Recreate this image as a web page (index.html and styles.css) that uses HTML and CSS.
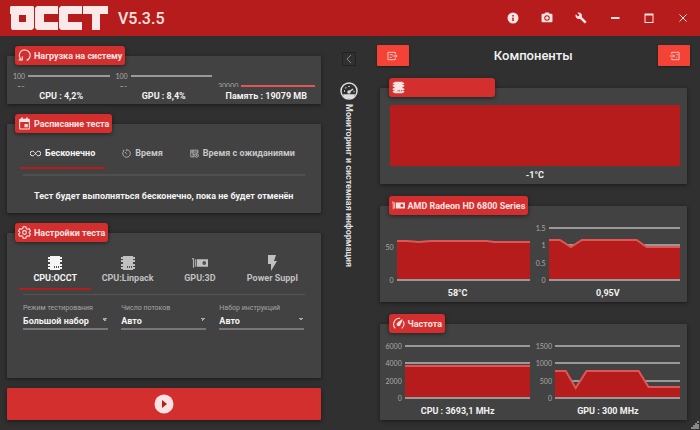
FILE: index.html
```
<!DOCTYPE html>
<html lang="ru">
<head>
<meta charset="utf-8">
<title>OCCT V5.3.5</title>
<meta name="viewport" content="width=device-width, initial-scale=1">
<link rel="stylesheet" href="styles.css">
</head>
<body>
<svg class="sprite" aria-hidden="true">
  <symbol id="chip" viewBox="0 0 16 14"><path d="M3 0h10v1h2v2h-2v1h2v2h-2v2h2v2h-2v1h2v2h-2v1H3v-1H1v-2h2v-1H1V8h2V6H1V4h2V3H1V1h2z"/><path class="hole" d="M7 10h1v2H7zM9 10h1v2H9zM11 10h1v2h-1z"/></symbol>
  <symbol id="gpu" viewBox="0 0 17 10"><path d="M0 0h2v10H1V1H0zM3 1h1v8H3zM5 1h12v8H5z"/><circle class="hole" cx="13" cy="5" r="2"/></symbol>
</svg>

<header class="titlebar">
  <svg class="logo" viewBox="0 0 98 24" role="img" aria-label="OCCT">
    <path fill-rule="evenodd" d="M1 0H23L24 1V22L22 24H2L1 22V8H0V1zM9 9V16H16V9z"/>
    <path d="M27 0H48V8H34V16H48V24H27L25 22V2z"/>
    <path d="M51 0H72V8H58V16H72V24H51L49 22V2z"/>
    <path d="M73 0H98V8H90V24H82V8H73z"/>
  </svg>
  <h1 class="version">V5.3.5</h1>
  <nav class="window-actions">
    <button class="win-btn" aria-label="Информация"><svg viewBox="0 0 24 24"><path d="M12 1a11 11 0 1 0 0 22 11 11 0 0 0 0-22zm1.500 17h-3v-7h3zm0-9h-3V6h3z"/></svg></button>
    <button class="win-btn" aria-label="Снимок"><svg viewBox="1 1 22 22"><circle cx="12" cy="12" r="3.200"/><path d="M9 2 7.200 4H4a2 2 0 0 0-2 2v12a2 2 0 0 0 2 2h16a2 2 0 0 0 2-2V6a2 2 0 0 0-2-2h-3.200L15 2zm3 15a5 5 0 1 1 0-10 5 5 0 0 1 0 10z"/></svg></button>
    <button class="win-btn" aria-label="Настройки"><svg viewBox="0 0 24 24"><path d="M22.700 19l-9.100-9.100c.9-2.300.4-5-1.500-6.900-2-2-5-2.400-7.400-1.300L9 6 6 9 1.600 4.700C.4 7.100.9 10.100 2.900 12.100c1.900 1.900 4.600 2.400 6.900 1.500l9.100 9.100c.4.400 1 .4 1.400 0l2.300-2.300c.5-.4.5-1.100.1-1.400z"/></svg></button>
    <button class="win-btn" aria-label="Свернуть"><svg viewBox="0 0 24 24"><path d="M4 10h17v4H4z"/></svg></button>
    <button class="win-btn" aria-label="Развернуть"><svg viewBox="0 0 24 24"><path d="M3 3h18v19H3zm2 4v13h14V7z" fill-rule="evenodd"/></svg></button>
    <button class="win-btn" aria-label="Закрыть"><svg viewBox="0 0 24 24"><path d="M5 5l14 14M19 5 5 19" stroke="#fbe3e3" stroke-width="2"/></svg></button>
  </nav>
</header>

<main class="workspace">
  <section class="controls">
    <article class="card load">
      <h2 class="badge"><svg class="badge-icon line" viewBox="0 0 24 24"><path d="M7 20A10 10 0 1 1 16 21"/><path d="M1 20h7v-6"/></svg>Нагрузка на систему</h2>
      <div class="load-grid">
        <div class="load-item">
          <div class="load-chart"><div class="load-axis"><span>100</span><span>50</span></div><div class="load-line"></div></div>
          <p class="value">CPU : 4,2%</p>
        </div>
        <div class="load-item">
          <div class="load-chart"><div class="load-axis"><span>100</span><span>50</span></div><div class="load-line"></div></div>
          <p class="value">GPU : 8,4%</p>
        </div>
        <div class="load-item">
          <div class="load-chart memory"><div class="load-axis"><span>30000</span></div><div class="load-line"></div></div>
          <p class="value">Память : 19079 MB</p>
        </div>
      </div>
    </article>

    <article class="card schedule">
      <h2 class="badge"><svg class="badge-icon" viewBox="1 0 22 24"><path d="M19 3h-1V1h-3v2H9V1H6v2H4a2 2 0 0 0-2 2v16a2 2 0 0 0 2 2h16a2 2 0 0 0 2-2V5a2 2 0 0 0-2-2zm1 18H4V9h16zm-8-8h6v6h-6z"/></svg>Расписание теста</h2>
      <div class="tabs" role="tablist">
        <button class="tab active" role="tab" aria-selected="true"><svg viewBox="0 0 24 24" class="tab-icon wide"><path d="M12 12C9 8 8 7 5.500 7a5 5 0 0 0 0 10C8 17 9 16 12 12s4-5 6.500-5a5 5 0 0 1 0 10C16 17 15 16 12 12z"/></svg>Бесконечно</button>
        <button class="tab" role="tab"><svg viewBox="0 0 24 24" class="tab-icon"><path d="M5 5a10 10 0 1 0 7-3M12 2v4M8 8l5 6M2 3l4 1"/></svg>Время</button>
        <button class="tab" role="tab"><svg viewBox="0 0 24 24" class="tab-icon"><path d="M12 21H2V3h19v8M2 8h19M8 3v18M8 14h5"/><circle cx="17.500" cy="17" r="5"/><path d="M17 14v4h3"/></svg>Время с ожиданиями</button>
      </div>
      <p class="note">Тест будет выполняться бесконечно, пока не будет отменён</p>
    </article>

    <article class="card settings">
      <h2 class="badge"><svg class="badge-icon line" viewBox="0 0 24 24"><path d="M9.500 1.500h5l.8 3.300 2 1.200 3.300-1 2.400 4.200-2.400 2.300v1l2.400 2.300-2.400 4.200-3.300-1-2 1.200-.8 3.300h-5l-.8-3.300-2-1.200-3.300 1L1 14.800l2.400-2.300v-1L1 9.200 3.400 5l3.300 1 2-1.200z"/><circle cx="12" cy="12" r="3.500"/></svg>Настройки теста</h2>
      <div class="test-tabs" role="tablist">
        <button class="test-tab active" role="tab" aria-selected="true"><svg class="test-icon"><use href="#chip"/></svg>CPU:OCCT</button>
        <button class="test-tab" role="tab"><svg class="test-icon"><use href="#chip"/></svg>CPU:Linpack</button>
        <button class="test-tab" role="tab"><svg class="test-icon"><use href="#gpu"/></svg>GPU:3D</button>
        <button class="test-tab" role="tab"><svg class="test-icon" viewBox="0 0 16 16"><path d="M4 0h8l-2 6h3L7 16V9H4z"/></svg>Power Suppl</button>
      </div>
      <div class="fields">
        <div class="field"><label for="mode">Режим тестирования</label><select id="mode"><option>Большой набор</option></select></div>
        <div class="field"><label for="threads">Число потоков</label><select id="threads"><option>Авто</option></select></div>
        <div class="field"><label for="isa">Набор инструкций</label><select id="isa"><option>Авто</option></select></div>
      </div>
    </article>

    <button class="start" aria-label="Запустить тест"><svg viewBox="0 0 20 20"><circle cx="10" cy="10" r="9.500" fill="#fbe3e3"/><path d="M8 6l5 4-5 4z" fill="#b71c1c"/></svg></button>
  </section>

  <aside class="rail">
    <button class="collapse" aria-label="Свернуть панель"><svg viewBox="0 0 12 12" fill="none" stroke="currentColor"><path d="M8 2 4 6l4 4"/></svg></button>
    <div class="rail-tab">
      <svg class="rail-icon" viewBox="0 0 18 18" fill="none" stroke="#ddd" stroke-width="1.500"><circle cx="9" cy="9" r="8"/><path d="M4 13h10l-1 2.500H5z" fill="#ddd"/><circle cx="9" cy="10" r="1" fill="#ddd"/><path d="M9 10l4-3"/><path d="M4 9h1M5.500 5.500l.7.7M9 4v1M13.500 9.500h1"/></svg>
      <span class="rail-text">Мониторинг и системная информация</span>
    </div>
  </aside>

  <section class="monitor">
    <div class="monitor-head">
      <button class="nav-btn" aria-label="Назад"><svg viewBox="0 0 12 10" fill="none" stroke="currentColor"><path d="M9 3V1H1v8h8V7M3 3.500h3M3 6.500h2M6 5h5M9 3.500 11 5 9 6.500"/></svg></button>
      <h2 class="monitor-title">Компоненты</h2>
      <button class="nav-btn" aria-label="Вперёд"><svg viewBox="0 0 12 10" fill="none" stroke="currentColor"><path d="M3 3V1h8v8H3V7M1 5h5M4.500 3.500 6 5 4.500 6.500M8 3.500h2M8 6.500h1"/></svg></button>
    </div>

    <article class="card sensor single">
      <h3 class="badge blank"><svg class="badge-icon"><use href="#chip"/></svg></h3>
      <div class="filled"></div>
      <p class="value">-1°C</p>
    </article>

    <article class="card sensor">
      <h3 class="badge"><svg class="badge-icon"><use href="#gpu"/></svg>AMD Radeon HD 6800 Series</h3>
      <div class="chart-pair">
        <figure class="chart">
          <div class="axis half"><span>50</span><span>0</span></div>
          <svg class="plot" viewBox="0 0 134 54" preserveAspectRatio="none"><path class="grid" d="M0 20H134M0 53H134"/><path class="area" d="M0 14H10L22 15 34 14H90L98 15H134V52H0z"/><path class="trend" d="M0 14H10L22 15 34 14H90L98 15H134"/></svg>
          <figcaption class="value">58°C</figcaption>
        </figure>
        <figure class="chart">
          <div class="axis"><span>1.5</span><span>1</span><span>0.5</span><span>0</span></div>
          <svg class="plot" viewBox="0 0 132 54" preserveAspectRatio="none"><path class="grid" d="M0 1H132M0 18H132M0 36H132M0 53H132"/><path class="area" d="M0 13H11L22 20 33 13H88L98 20H132V52H0z"/><path class="trend" d="M0 13H11L22 20 33 13H88L98 20H132"/></svg>
          <figcaption class="value">0,95V</figcaption>
        </figure>
      </div>
    </article>

    <article class="card sensor">
      <h3 class="badge"><svg class="badge-icon line" viewBox="0 0 24 24"><path d="M6 21A11 11 0 0 1 15 2.500M21 8a11 11 0 0 1-3 13"/><path d="M19 5l-5 10a2.500 2.500 0 1 1-4-3z" fill="currentColor"/></svg>Частота</h3>
      <div class="chart-pair">
        <figure class="chart">
          <div class="axis"><span>6000</span><span>4000</span><span>2000</span><span>0</span></div>
          <svg class="plot" viewBox="0 0 127 54" preserveAspectRatio="none"><path class="grid" d="M0 1H127M0 18H127M0 36H127M0 53H127"/><path class="area" d="M0 21H127V52H0z"/><path class="trend" d="M0 21H127"/></svg>
          <figcaption class="value">CPU : 3693,1 MHz</figcaption>
        </figure>
        <figure class="chart">
          <div class="axis"><span>1500</span><span>1000</span><span>500</span><span>0</span></div>
          <svg class="plot" viewBox="0 0 127 54" preserveAspectRatio="none"><path class="grid" d="M0 1H127M0 18H127M0 36H127M0 53H127"/><path class="area" d="M0 26H11L21 43 32 26H85L95 42H127V52H0z"/><path class="trend" d="M0 26H11L21 43 32 26H85L95 42H127"/></svg>
          <figcaption class="value">GPU : 300 MHz</figcaption>
        </figure>
      </div>
    </article>
  </section>
</main>
<svg class="grip" viewBox="0 0 10 10" aria-hidden="true"><path d="M7 1h2v2H7zM5 3h2v1h2v2H5zM3 5h2v4H3zM1 7h2v2H1zM5 6h4v3H5z"/></svg>
</body>
</html>
```
FILE: styles.css
```
* {
  box-sizing: border-box;
}

body {
  margin: 0;
  min-height: 100vh;
  display: flex;
  flex-direction: column;
  background: #303030;
  color: #f2f2f2;
  font-family: Roboto, sans-serif;
  font-size: 9px;
  font-weight: 700;
}

h1, h2, h3, p, figure {
  margin: 0;
}

button, select {
  margin: 0;
  border: 0;
  padding: 0;
  background: none;
  color: inherit;
  font: inherit;
}

.sprite {
  position: absolute;
  width: 0;
  height: 0;
}

.hole {
  fill: var(--hole, #555);
}

/* Title bar */
.titlebar {
  display: flex;
  align-items: center;
  height: 36px;
  padding: 0 8px 0 10px;
  background: #b71c1c;
}

.logo {
  width: 98px;
  height: 24px;
  fill: #fbe9e9;
}

.version {
  margin-left: 10px;
  font-size: 16px;
  font-weight: 500;
  color: #fbe3e3;
}

.window-actions {
  display: flex;
  gap: 16px;
  margin-left: auto;
}

.win-btn {
  display: grid;
  place-items: center;
  width: 18px;
  height: 18px;
}

.win-btn svg {
  width: 12px;
  height: 12px;
  fill: #fbe3e3;
}

/* Page grid */
.workspace {
  flex: 1;
  display: grid;
  grid-template-columns: minmax(0, 1fr) 56px minmax(0, 1fr);
  padding: 0 10px 10px 7px;
}

.controls {
  display: flex;
  flex-direction: column;
  padding-top: 20px;
}

/* Cards */
.card {
  position: relative;
  background: #424242;
  border-radius: 1px;
  box-shadow: 0 1px 4px rgba(0, 0, 0, 0.5);
}

.badge {
  --hole: #d32f2f;
  position: absolute;
  top: -10px;
  left: 8px;
  display: flex;
  align-items: center;
  gap: 3px;
  height: 19px;
  padding: 0 3px;
  border-radius: 3px;
  background: #d32f2f;
  box-shadow: 0 1px 4px rgba(0, 0, 0, 0.5);
  color: #fbe3e3;
  font-size: 9px;
  font-weight: 700;
  white-space: nowrap;
}

.badge-icon {
  width: 13px;
  height: 13px;
  fill: currentColor;
}

.badge-icon.line {
  fill: none;
  stroke: currentColor;
  stroke-width: 2;
}

.value {
  text-align: center;
  line-height: 12px;
}

/* System load */
.load {
  height: 48px;
  margin-bottom: 20px;
  padding: 14px 3px 0;
}

.load-grid {
  display: grid;
  grid-template-columns: repeat(3, 1fr);
}

.load-chart {
  display: grid;
  grid-template-columns: auto 1fr;
  gap: 3px;
  height: 17px;
  padding: 2px 3px 0;
  overflow: hidden;
  margin-bottom: 3px;
}

.load-axis {
  display: flex;
  flex-direction: column;
  align-items: flex-end;
  gap: 5px;
  color: #aaa;
  font: 7px/8px Lato, sans-serif;
}

.load-line {
  height: 2px;
  margin-top: 3px;
  background: #999;
}

.memory {
  padding-top: 12px;
}

.memory .load-line {
  background: #e05555;
}

/* Schedule */
.schedule {
  height: 89px;
  margin-bottom: 20px;
  padding: 15px 13px 0;
}

.tabs {
  display: flex;
  gap: 7px;
  margin: 0 3px;
  padding-bottom: 5px;
  border-bottom: 2px solid #4f4f4f;
}

.tab {
  display: flex;
  align-items: center;
  gap: 4px;
  height: 30px;
  padding: 0 10px;
  border-bottom: 2px solid transparent;
  color: #c8c8c8;
  white-space: nowrap;
}

.tab:first-child {
  margin-left: -3px;
}

.tab.active,
.test-tab.active {
  color: #f5f5f5;
  border-bottom-color: #b71c1c;
}

.tab-icon {
  width: 9px;
  height: 9px;
  fill: none;
  stroke: currentColor;
  stroke-width: 2;
}

.tab-icon.wide {
  width: 11px;
  height: 11px;
}

.note {
  margin-top: 13px;
  text-align: center;
  line-height: 14px;
}

/* Test settings */
.settings {
  flex: 1;
  margin-bottom: 10px;
  padding: 22px 12px 0;
}

.test-tabs {
  display: grid;
  grid-template-columns: repeat(4, 1fr);
}

.test-tab {
  display: flex;
  flex-direction: column;
  align-items: center;
  padding-bottom: 2px;
  border-bottom: 2px solid transparent;
  color: #c0c0c0;
  line-height: 15px;
}

.test-icon {
  width: 16px;
  height: 16px;
  fill: currentColor;
}

.fields {
  display: grid;
  grid-template-columns: repeat(3, 1fr);
  gap: 13px;
  margin: 4px 4px 0;
  padding-top: 9px;
  border-top: 1px solid #555;
}

.field {
  display: flex;
  flex-direction: column;
}

.field label {
  color: #a5a5a5;
  font-size: 7px;
  font-weight: 400;
  line-height: 9px;
}

.field select {
  appearance: none;
  height: 17px;
  border-bottom: 2px solid #777;
  background: linear-gradient(to bottom right, #aaa 50%, transparent 50%) right 0 top 5px / 3px 3px no-repeat,
    linear-gradient(to bottom left, #aaa 50%, transparent 50%) right 3px top 5px / 3px 3px no-repeat;
}

.start {
  display: grid;
  place-items: center;
  height: 32px;
  border-radius: 1px;
  background: #d32f2f;
  box-shadow: 0 1px 4px rgba(0, 0, 0, 0.5);
}

.start svg {
  width: 20px;
  height: 20px;
}

/* Divider rail */
.rail {
  display: flex;
  flex-direction: column;
  align-items: center;
  padding-top: 16px;
}

.collapse {
  display: grid;
  place-items: center;
  width: 14px;
  height: 14px;
  border: 1px solid #222;
  color: #888;
}

.collapse svg {
  width: 12px;
  height: 12px;
}

.rail-tab {
  display: flex;
  flex-direction: column;
  align-items: center;
  gap: 4px;
  margin-top: 16px;
}

.rail-icon {
  width: 18px;
  height: 18px;
}

.rail-text {
  writing-mode: vertical-rl;
  color: #ddd;
  white-space: nowrap;
}

/* Monitoring */
.monitor {
  display: grid;
  grid-template-rows: auto repeat(3, 1fr);
  row-gap: 22px;
  padding-top: 9px;
}

.monitor-head {
  display: flex;
  align-items: center;
  justify-content: space-between;
}

.monitor-title {
  font-size: 13px;
  font-weight: 500;
}

.nav-btn {
  display: grid;
  place-items: center;
  width: 32px;
  height: 21px;
  border-radius: 1px;
  background: #f44336;
  color: #fbd0cc;
  box-shadow: 0 1px 3px rgba(0, 0, 0, 0.4);
}

.nav-btn svg {
  width: 11px;
  height: 10px;
}

.sensor {
  display: flex;
  flex-direction: column;
  margin: 0 3px;
  padding: 21px 7px 0 6px;
}

.sensor .badge {
  left: 9px;
}

.single {
  padding: 17px 7px 3px 10px;
}

.blank {
  width: 106px;
}

.filled {
  flex: 1;
  margin-bottom: 3px;
  background: #b71c1c;
}

.chart-pair {
  display: grid;
  grid-template-columns: 1fr 1fr;
  gap: 6px;
}

.chart {
  display: grid;
  grid-template-columns: auto 1fr;
  grid-template-rows: 54px 12px;
  column-gap: 3px;
  row-gap: 6px;
}

.chart .value {
  grid-column: 1 / -1;
}

.axis {
  display: flex;
  flex-direction: column;
  justify-content: space-between;
  align-items: flex-end;
  margin: -3px 0;
  color: #aaa;
  font: 7px/8px Lato, sans-serif;
}

.axis.half {
  padding-top: 19px;
}

.plot {
  width: 100%;
  height: 54px;
}

.grid {
  stroke: #999;
  stroke-width: 2;
}

.area {
  fill: #b71c1c;
}

.trend {
  fill: none;
  stroke: #e05555;
  stroke-width: 2;
}

.grip {
  position: fixed;
  right: 0;
  bottom: 0;
  width: 10px;
  height: 10px;
  fill: #888;
}
```
